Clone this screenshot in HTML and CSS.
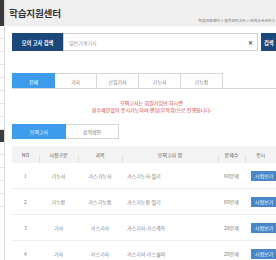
FILE: index.html
```html
<!DOCTYPE html>
<html lang="ko">
<head>
<meta charset="utf-8">
<link rel="stylesheet" href="styles.css">
</head>
<body>
<div class="page">
  <aside class="side">
    <div class="side-top"></div>
    <div class="side-item"></div>
    <div class="side-item"></div>
    <div class="side-item"></div>
    <div class="side-item"></div>
    <div class="side-item"></div>
    <div class="side-item"></div>
    <div class="side-item"></div>
    <div class="side-item"></div>
    <div class="side-dark"></div>
    <div class="side-item"></div>
    <div class="side-item"></div>
    <div class="side-item"></div>
    <div class="side-item"></div>
    <div class="side-item"></div>
  </aside>
  <main class="main">
    <header class="head">
      <h1 class="title">학습지원센터</h1>
      <div class="crumb">학습지원센터 &gt; 실전모의고사 &gt; 모의고사서비스</div>
    </header>
    <div class="content">
      <div class="search">
        <div class="search-label">모의 고사 검색</div>
        <div class="search-input">
          <span class="ph">일반기계기사</span>
          <span class="clear">✕</span>
        </div>
        <div class="search-btn">검색</div>
      </div>

      <div class="tabs">
        <div class="tab on">전체</div>
        <div class="tab">기사</div>
        <div class="tab">산업기사</div>
        <div class="tab">기능사</div>
        <div class="tab">기능장</div>
      </div>

      <p class="notice">모의고사는 회원가입만 하시면<br>횟수제한없이 응시가능하며 랜덤(무작위)으로 진행됩니다.</p>

      <div class="tabs2">
        <div class="tab2 on">모의고사</div>
        <div class="tab2">성적확인</div>
      </div>

      <div class="table">
        <div class="tr th">
          <div class="c no">NO</div>
          <div class="c kind">시험구분</div>
          <div class="c subj">과목</div>
          <div class="c name center">모의고사 명</div>
          <div class="c cnt">문제수</div>
          <div class="c act">응시</div>
        </div>
        <div class="tr">
          <div class="c no">1</div>
          <div class="c kind">기능사</div>
          <div class="c subj">가스기능사</div>
          <div class="c name">가스기능사·필기</div>
          <div class="c cnt">60문제</div>
          <div class="c act"><span class="btn">시험보기</span></div>
        </div>
        <div class="tr">
          <div class="c no">2</div>
          <div class="c kind">기능장</div>
          <div class="c subj">가스기능장</div>
          <div class="c name">가스기능장·필기</div>
          <div class="c cnt">60문제</div>
          <div class="c act"><span class="btn">시험보기</span></div>
        </div>
        <div class="tr">
          <div class="c no">3</div>
          <div class="c kind">기사</div>
          <div class="c subj">가스기사</div>
          <div class="c name">가스기사·가스계측</div>
          <div class="c cnt">20문제</div>
          <div class="c act"><span class="btn">시험보기</span></div>
        </div>
        <div class="tr">
          <div class="c no">4</div>
          <div class="c kind">기사</div>
          <div class="c subj">가스기사</div>
          <div class="c name">가스기사·가스설비</div>
          <div class="c cnt">20문제</div>
          <div class="c act"><span class="btn">시험보기</span></div>
        </div>
      </div>
    </div>
  </main>
</div>
</body>
</html>
```

FILE: styles.css
```css
* { box-sizing: border-box; margin: 0; padding: 0; }
html, body { width: 276px; height: 260px; overflow: hidden; background: #fff; }
body {
  font-family: "Noto Sans CJK KR", "Noto Sans", sans-serif;
  color: #555;
  font-size: 5px;
}
.page { display: flex; width: 276px; height: 260px; }

.side {
  width: 5px;
  flex: none;
  border-right: 1px solid #d8d8d8;
  display: flex;
  flex-direction: column;
}
.side-top { height: 26px; background: #3b3b3b; }
.side-item { height: 13px; border-bottom: 1px solid #e4e4e4; }
.side-dark { height: 12px; background: #3b3b3b; }

.main { flex: 1; min-width: 0; }

.head {
  height: 26px;
  background: #efefef;
  position: relative;
  display: flex;
  align-items: center;
  padding-left: 4px;
}
.title {
  font-size: 9.6px;
  font-weight: 700;
  color: #333;
  letter-spacing: -0.2px;
  margin-top: -1px;
}
.crumb {
  position: absolute;
  right: 1px;
  top: 17px;
  font-size: 3.9px;
  color: #666;
  white-space: nowrap;
}

.content { padding: 7px 0 0 7px; }

.search { display: flex; height: 18px; }
.search-label {
  width: 51px;
  flex: none;
  background: #1c477b;
  color: #fff;
  font-size: 5.2px;
  font-weight: 700;
  display: flex;
  align-items: center;
  justify-content: center;
}
.search-input {
  width: 195px;
  flex: none;
  border: 1px solid #cfcfcf;
  display: flex;
  align-items: center;
  justify-content: space-between;
  padding: 0 4px 0 5px;
}
.ph { color: #999; font-size: 5px; }
.clear { color: #555; font-size: 6px; font-weight: 700; }
.search-btn {
  margin-left: 3px;
  width: 20px;
  flex: none;
  background: #1c477b;
  color: #fff;
  font-size: 5.2px;
  font-weight: 700;
  display: flex;
  align-items: center;
  padding-left: 3px;
}

.tabs {
  margin-top: 22px;
  display: flex;
  height: 16px;
  border-bottom: 1px solid #d6d6d6;
}
.tab {
  width: 42px;
  border: 1px solid #d6d6d6;
  border-left: none;
  border-bottom: none;
  display: flex;
  align-items: center;
  justify-content: center;
  font-size: 5px;
  color: #777;
}
.tab:first-child { border-left: 1px solid #d6d6d6; width: 43px; }
.tab.on { background: #3d9beb; color: #fff; border-color: #3d9beb; }

.notice {
  margin-top: 10px;
  text-align: center;
  color: #d6383a;
  font-size: 5px;
  line-height: 7px;
  padding-left: 15px;
}

.tabs2 { margin-top: 11px; display: flex; height: 15px; }
.tab2 {
  width: 54px;
  border: 1px solid #d6d6d6;
  display: flex;
  align-items: center;
  justify-content: center;
  font-size: 5px;
  color: #777;
}
.tab2 + .tab2 { border-left: none; width: 53px; }
.tab2.on { background: #3d9beb; color: #fff; border-color: #3d9beb; }

.table { margin-top: 7px; }
.tr {
  display: flex;
  height: 26px;
  border-bottom: 1px solid #ececec;
  align-items: center;
}
.tr.th {
  height: 17px;
  background: #f3f3f3;
  border-bottom: none;
}
.c { text-align: center; white-space: nowrap; font-size: 5px; color: #7a7a7a; }
.th .c { color: #555; position: relative; }
.th .c + .c::before {
  content: "";
  position: absolute;
  left: 0;
  top: 5px;
  height: 7px;
  border-left: 1px solid #dedede;
}
.no { width: 27px; }
.kind { width: 39px; }
.subj { width: 44px; }
.name { width: 96px; text-align: left; padding-left: 5px; }
.name.center { text-align: center; padding-left: 0; }
.cnt { width: 27px; }
.act { width: 31px; text-align: left; padding-left: 6px; }
.th .act { text-align: center; padding-left: 0; }
.btn {
  display: inline-block;
  width: 26px;
  height: 10px;
  line-height: 10px;
  background: #4a87c9;
  color: #fff;
  text-align: center;
  font-size: 5px;
}
```
